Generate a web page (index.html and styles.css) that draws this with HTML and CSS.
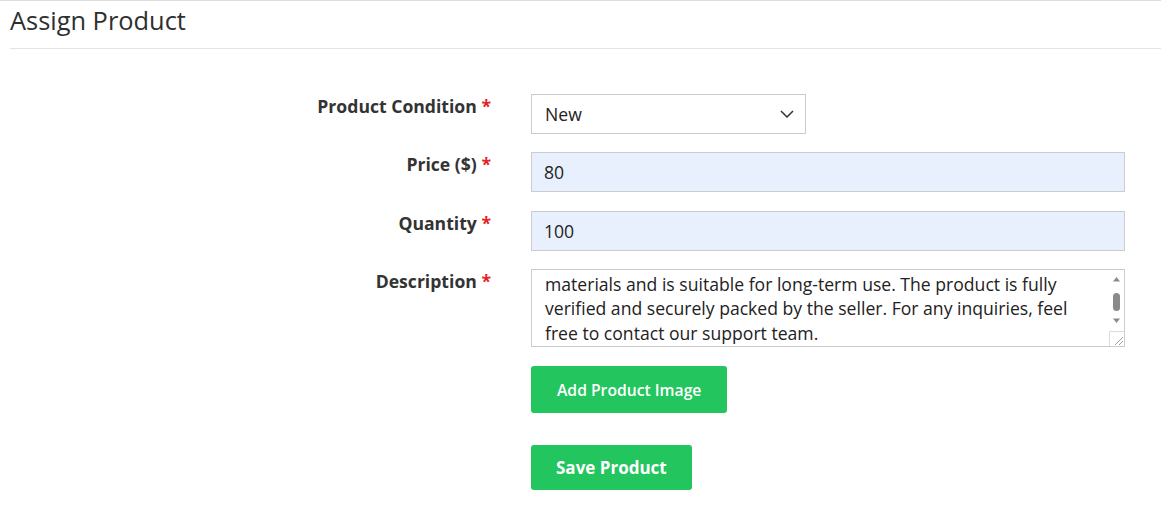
FILE: index.html
```html
<!DOCTYPE html>
<html lang="en">
<head>
    <meta charset="UTF-8">
    <meta name="viewport" content="width=device-width, initial-scale=1.0">
    <title>Assign Product</title>
    <link rel="stylesheet" href="styles.css">
</head>
<body>
    <div class="page">
        <h2 class="page-title">Assign Product</h2>

        <form class="assign-form" onsubmit="return false">
            <div class="form-row">
                <label class="form-label" for="condition">Product Condition <span class="req">*</span></label>
                <div class="form-field">
                    <div class="select-wrap">
                        <select id="condition" class="form-select">
                            <option selected>New</option>
                            <option>Used</option>
                            <option>Refurbished</option>
                        </select>
                        <svg class="select-arrow" width="14" height="8" viewBox="0 0 14 8">
                            <path d="M1 1l6 6 6-6" fill="none" stroke="#333" stroke-width="1.5"/>
                        </svg>
                    </div>
                </div>
            </div>

            <div class="form-row row-price">
                <label class="form-label" for="price">Price ($) <span class="req">*</span></label>
                <div class="form-field">
                    <input id="price" class="form-input filled" type="text" value="80">
                </div>
            </div>

            <div class="form-row">
                <label class="form-label" for="qty">Quantity <span class="req">*</span></label>
                <div class="form-field">
                    <input id="qty" class="form-input filled" type="text" value="100">
                </div>
            </div>

            <div class="form-row">
                <label class="form-label" for="desc">Description <span class="req">*</span></label>
                <div class="form-field textarea-wrap">
                    <textarea id="desc" class="form-textarea">This product is brand new and comes in its original packaging.
It has been checked for quality before shipping.
It is made from durable, high quality
materials and is suitable for long-term use. The product is fully verified and securely packed by the seller. For any inquiries, feel free to contact our support team.</textarea>
                    <!-- scrollbar + resize corner, drawn since the browser hides them -->
                    <svg class="ta-scroll" width="15" height="76" viewBox="0 0 15 76">
                        <rect width="15" height="76" fill="#fff"/>
                        <path d="M4 11.5h7l-3.5-4.5z" fill="#8a8a8a"/>
                        <rect x="4" y="23" width="7" height="18" rx="3.5" fill="#8a8a8a"/>
                        <path d="M4 48.5h7l-3.5 4.5z" fill="#8a8a8a"/>
                        <path d="M0.5 76V61.5H15" fill="none" stroke="#dcdcdc"/>
                        <path d="M14 67l-8 8M14 71l-4 4" fill="none" stroke="#a0a0a0"/>
                    </svg>
                </div>
            </div>

            <div class="form-row">
                <div class="form-label"></div>
                <div class="form-field">
                    <button type="button" class="btn btn-image">Add Product Image</button>
                </div>
            </div>

            <div class="form-row">
                <div class="form-label"></div>
                <div class="form-field">
                    <button type="submit" class="btn btn-save">Save Product</button>
                </div>
            </div>
        </form>
    </div>

    <script>
        // show the end of the description, like after typing
        const desc = document.getElementById('desc');
        desc.scrollTop = desc.scrollHeight;
    </script>
</body>
</html>
```

FILE: styles.css
```css
body {
    margin: 0;
    font-family: "Open Sans", Arial, sans-serif;
    color: #333;
    background: #fff;
    border-top: 1px solid #ddd;
}

.page {
    padding: 0 0 0 10px;
}

.page-title {
    font-size: 25.4px;
    font-weight: 400;
    line-height: 33px;
    margin: 3px 0 0 0;
    padding-bottom: 11px;
    border-bottom: 1px solid #e3e3e3;
    color: #2f2f2f;
}

.assign-form {
    padding-top: 45px;
}

.form-row {
    display: flex;
    margin-bottom: 18px;
}

.row-price {
    margin-bottom: 19px;
}

.form-label {
    width: 481px;
    flex-shrink: 0;
    text-align: right;
    font-size: 17.6px;
    font-weight: 700;
    line-height: 24px;
    color: #333;
}

.req {
    color: #e02424;
}

.form-field {
    margin-left: 40px;
    width: 594px;
}

.select-wrap {
    position: relative;
    width: 275px;
}

.form-select {
    appearance: none;
    -webkit-appearance: none;
    width: 275px;
    height: 40px;
    border: 1px solid #ccc;
    border-radius: 0;
    background: #fff;
    font-family: inherit;
    font-size: 17.6px;
    color: #222;
    padding: 0 13px;
}

.select-arrow {
    position: absolute;
    right: 12px;
    top: 16px;
    pointer-events: none;
}

.form-input {
    box-sizing: border-box;
    width: 594px;
    height: 40px;
    border: 1px solid #ccc;
    font-family: inherit;
    font-size: 17.6px;
    color: #222;
    padding: 0 12px;
    background: #fff;
}

.form-input.filled {
    background: #e8f0fe;
}

.textarea-wrap {
    position: relative;
}

.form-textarea {
    display: block;
    box-sizing: border-box;
    width: 594px;
    height: 78px;
    border: 1px solid #ccc;
    font-family: inherit;
    font-size: 17.6px;
    line-height: 24.6px;
    color: #222;
    padding: 2px 27px 0 13px;
    resize: none;
    overflow-y: auto;
}

.ta-scroll {
    position: absolute;
    top: 1px;
    right: 1px;
    pointer-events: none;
}

.btn {
    border: none;
    border-radius: 3px;
    background-color: #22c55e;
    color: #fff;
    font-family: inherit;
    cursor: pointer;
}

.btn-image {
    height: 47px;
    padding: 0 26px;
    font-size: 15.7px;
    font-weight: 600;
    margin-top: 1px;
}

.btn-save {
    height: 45px;
    padding: 0 25px;
    font-size: 17px;
    font-weight: 700;
    margin-top: 14px;
}

.btn:hover {
    background-color: #16a34a;
}
```
